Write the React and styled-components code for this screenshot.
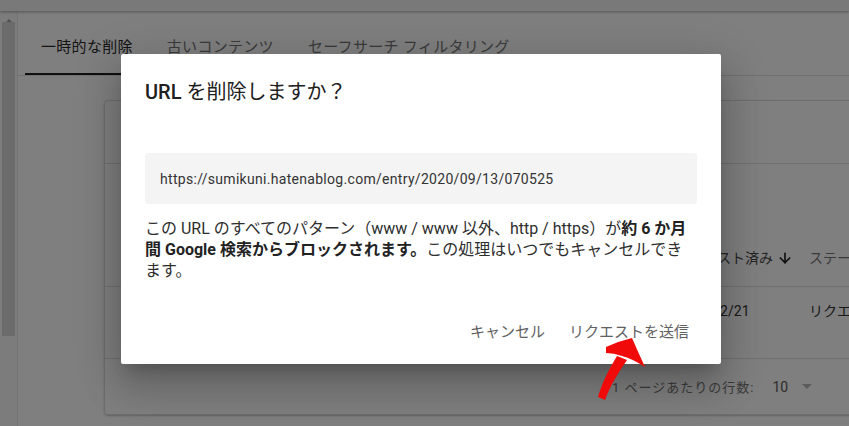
import React from 'react';
import styled, { createGlobalStyle } from 'styled-components';
import { ArrowDown } from 'lucide-react';

const GlobalStyle = createGlobalStyle`
  body {
    margin: 0;
    font-family: Roboto, "Noto Sans CJK JP", sans-serif;
    background: #fff;
  }
`;

const Screen = styled.div`
  position: relative;
  width: 849px;
  height: 426px;
  overflow: hidden;
  background: #fff;
`;

const TopBar = styled.div`
  position: relative;
  z-index: 1;
  height: 11px;
  background: #f3f3f3;
  box-shadow: 0 1px 3px rgba(0, 0, 0, 0.35);
`;

const Body = styled.div`
  display: flex;
  height: 415px;
`;

const ScrollPane = styled.div`
  width: 17px;
  flex-shrink: 0;
  background: #f8f8f8;
  border-right: 1px solid #ebebeb;
  display: flex;
  flex-direction: column;
  align-items: center;
`;

const ScrollButton = styled.div`
  height: 11px;
  width: 100%;
  display: flex;
  justify-content: center;
  padding-top: 1px;
  box-sizing: border-box;
  &::before {
    content: '';
    border-left: 3px solid transparent;
    border-right: 3px solid transparent;
    border-bottom: 3px solid #a3a3a3;
  }
`;

const Thumb = styled.div`
  width: 13px;
  height: 314px;
  background: #d6d6d6;
`;

const Main = styled.div`
  flex: 1;
  display: flex;
  flex-direction: column;
  min-width: 0;
`;

const TabBar = styled.div`
  display: flex;
  gap: 2px;
  height: 64px;
  padding-left: 7px;
  border-bottom: 1px solid #e2e2e2;
`;

const Tab = styled.div`
  display: flex;
  align-items: center;
  padding: 5px 16px 0;
  font-size: 15px;
  letter-spacing: 0.3px;
  color: ${p => (p.$active ? '#2a2a2a' : '#777')};
  box-shadow: ${p => (p.$active ? 'inset 0 -2px 0 #202020' : 'none')};
`;

const Card = styled.div`
  margin: 24px 0 0 86px;
  width: 780px;
  flex-shrink: 0;
  border: 1px solid #dcdcdc;
  border-radius: 4px;
  box-shadow: 0 1px 2px rgba(60, 64, 67, 0.3);
  display: flex;
  flex-direction: column;
`;

const CardToolbar = styled.div`
  height: 62px;
  border-bottom: 1px solid #e0e0e0;
`;

const FilterBar = styled.div`
  height: 66px;
`;

const Row = styled.div`
  display: grid;
  grid-template-columns: 546px 134px 1fr;
  height: ${p => p.$h}px;
  align-items: ${p => (p.$top ? 'start' : 'center')};
  padding: ${p => (p.$top ? 14 : 0)}px 0 0 24px;
  box-sizing: border-box;
  border-bottom: 1px solid #e0e0e0;
  font-size: 14px;
  line-height: 20px;
`;

const HeadCell = styled.div`
  display: flex;
  align-items: center;
  gap: 4px;
  white-space: nowrap;
  color: ${p => (p.$sorted ? '#4a4a4a' : '#777')};
`;

const Cell = styled.div`
  white-space: nowrap;
  color: #333;
`;

const Footer = styled.div`
  height: 55px;
  display: flex;
  align-items: center;
  padding-left: 507px;
  color: #777;
  white-space: nowrap;
`;

const PageLabel = styled.span`
  font-size: 13px;
  letter-spacing: 1px;
`;

const PageSize = styled.span`
  margin-left: 18px;
  font-size: 14px;
  color: #5a5a5a;
`;

const Caret = styled.span`
  margin-left: 14px;
  border-left: 5px solid transparent;
  border-right: 5px solid transparent;
  border-top: 5px solid #b8b8b8;
`;

const Scrim = styled.div`
  position: absolute;
  z-index: 2;
  inset: 0;
  background: rgba(0, 0, 0, 0.5);
  padding: 54px 0 0 121px;
`;

const Dialog = styled.div`
  width: 600px;
  height: 310px;
  background: #fff;
  border-radius: 2px;
  box-shadow: 0 11px 15px -7px rgba(0, 0, 0, 0.2), 0 24px 38px 3px rgba(0, 0, 0, 0.14),
    0 9px 46px 8px rgba(0, 0, 0, 0.12);
  display: flex;
  flex-direction: column;
`;

const Title = styled.h2`
  margin: 0;
  padding: 22px 24px 0;
  font-size: 20px;
  line-height: 32px;
  font-weight: 400;
  color: #202020;
`;

const TitleStrong = styled.span`
  font-weight: 500;
`;

const UrlBox = styled.div`
  margin: 45px 24px 0;
  height: 51px;
  padding: 0 15px;
  display: flex;
  align-items: center;
  background: #f4f4f4;
  border-radius: 3px;
  font-size: 14px;
  letter-spacing: 0.3px;
  color: #333;
`;

const Message = styled.p`
  margin: 14px 24px 0;
  font-size: 16px;
  line-height: 21px;
  color: #2e2e2e;
`;

const Strong = styled.b`
  font-weight: 700;
  color: #222;
`;

const Actions = styled.div`
  margin-top: auto;
  padding: 0 24px 16px;
  display: flex;
  justify-content: flex-end;
  gap: 8px;
`;

const TextButton = styled.button`
  height: 36px;
  padding: 0 8px;
  border: none;
  background: none;
  font-family: inherit;
  font-size: 15px;
  color: #616161;
`;

const Annotation = styled.svg`
  position: absolute;
  z-index: 3;
  left: 0;
  top: 0;
  pointer-events: none;
`;

export default function App() {
  return (
    <>
      <GlobalStyle />
      <Screen>
        <TopBar />
        <Body>
          <ScrollPane>
            <ScrollButton />
            <Thumb />
          </ScrollPane>
          <Main>
            <TabBar>
              <Tab $active>一時的な削除</Tab>
              <Tab>古いコンテンツ</Tab>
              <Tab>セーフサーチ フィルタリング</Tab>
            </TabBar>
            <Card>
              <CardToolbar />
              <FilterBar />
              <Row $h={57}>
                <HeadCell>URL</HeadCell>
                <HeadCell $sorted>
                  リクエスト済み
                  <ArrowDown size={16} strokeWidth={2.5} color="#222" />
                </HeadCell>
                <HeadCell>ステータス</HeadCell>
              </Row>
              <Row $h={72} $top>
                <Cell>https://sumikuni.hatenablog.com/entry/2020/09/13/070525</Cell>
                <Cell>2020/12/21</Cell>
                <Cell>リクエスト処理中</Cell>
              </Row>
              <Footer>
                <PageLabel>1 ページあたりの行数:</PageLabel>
                <PageSize>10</PageSize>
                <Caret />
              </Footer>
            </Card>
          </Main>
        </Body>
        <Scrim>
          <Dialog>
            <Title>
              <TitleStrong>URL</TitleStrong> を削除しますか？
            </Title>
            <UrlBox>https://sumikuni.hatenablog.com/entry/2020/09/13/070525</UrlBox>
            <Message>
              この URL のすべてのパターン（www / www 以外、http / https）が
              <Strong>約 6 か月間 Google 検索からブロックされます。</Strong>
              この処理はいつでもキャンセルできます。
            </Message>
            <Actions>
              <TextButton>キャンセル</TextButton>
              <TextButton>リクエストを送信</TextButton>
            </Actions>
          </Dialog>
        </Scrim>
        <Annotation width="849" height="426" viewBox="0 0 849 426">
          <path
            d="M598 397 C602 383 609 369 617 356 L627 360 C618 373 610 386 605 400 Z"
            fill="#f00a0a"
          />
          <path
            d="M606 347 Q619 341 632 338 Q638 352 645 367 Q633 359 622 356 Q614 353 606 353 Z"
            fill="#f00a0a"
          />
        </Annotation>
      </Screen>
    </>
  );
}
